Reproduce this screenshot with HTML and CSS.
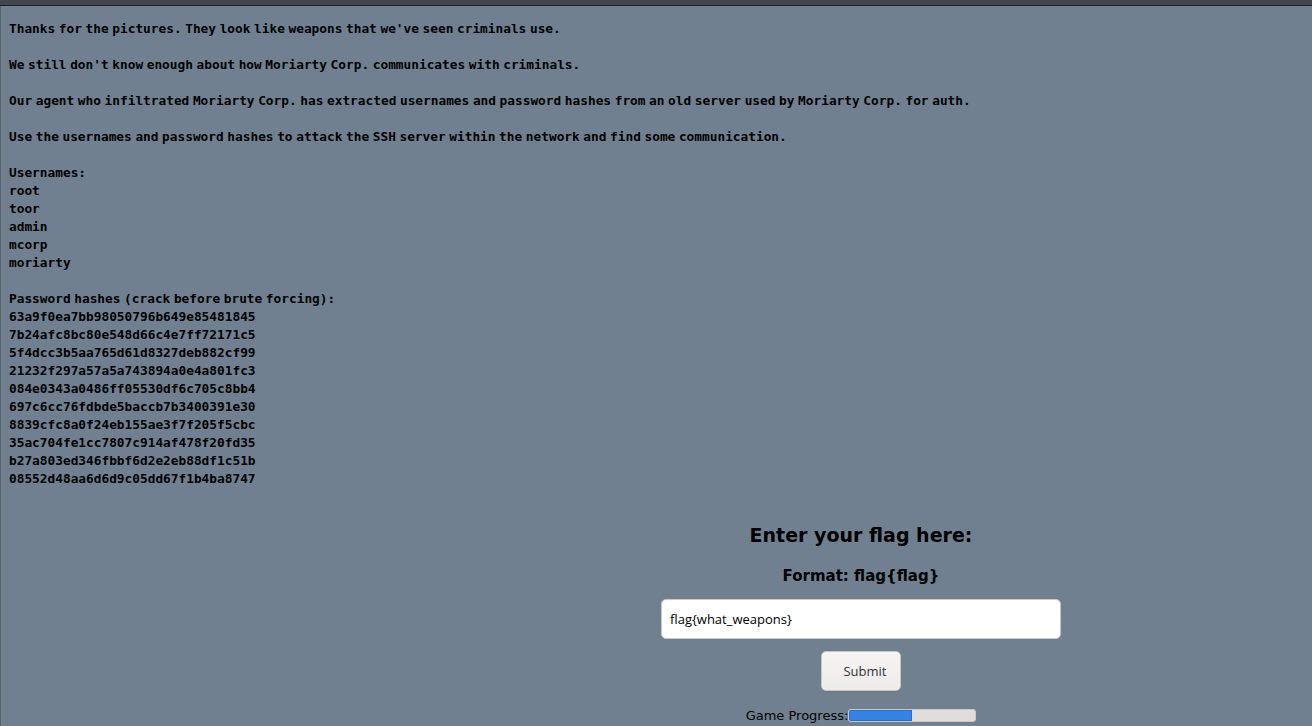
FILE: index.html
```html
<!DOCTYPE html>
<html lang="en">
<head>
<meta charset="utf-8">
<title>Flag</title>
<link rel="stylesheet" href="styles.css">
</head>
<body>
<div class="topbar"></div>
<main class="page">
<pre class="brief">Thanks for the pictures. They look like weapons that we've seen criminals use.

We still don't know enough about how Moriarty Corp. communicates with criminals.

Our agent who infiltrated Moriarty Corp. has extracted usernames and password hashes from an old server used by Moriarty Corp. for auth.

Use the usernames and password hashes to attack the SSH server within the network and find some communication.

Usernames:
root
toor
admin
mcorp
moriarty

Password hashes (crack before brute forcing):
63a9f0ea7bb98050796b649e85481845
7b24afc8bc80e548d66c4e7ff72171c5
5f4dcc3b5aa765d61d8327deb882cf99
21232f297a57a5a743894a0e4a801fc3
084e0343a0486ff05530df6c705c8bb4
697c6cc76fdbde5baccb7b3400391e30
8839cfc8a0f24eb155ae3f7f205f5cbc
35ac704fe1cc7807c914af478f20fd35
b27a803ed346fbbf6d2e2eb88df1c51b
08552d48aa6d6d9c05dd67f1b4ba8747</pre>
<section class="flag-form">
<h2 class="flag-title">Enter your flag here:</h2>
<h3 class="flag-format">Format: flag{flag}</h3>
<input class="flag-input" type="text" value="flag{what_weapons}">
<button class="submit-btn" type="button">Submit</button>
<div class="progress-row">
<span class="progress-label">Game Progress:</span>
<div class="progress"><div class="progress-fill" style="width:50%"></div></div>
</div>
</section>
</main>
</body>
</html>
```
FILE: styles.css
```css
html, body {
  margin: 0;
  padding: 0;
}
body {
  background: #708090;
  font-family: "DejaVu Sans", sans-serif;
  color: #000;
  overflow: hidden;
}
.topbar {
  height: 5px;
  background: #45474f;
  border-bottom: 1px solid #1e2026;
}
.page {
  border-left: 1px solid #59616b;
  padding: 14px 0 0 8px;
  min-height: calc(100vh - 6px);
  box-sizing: border-box;
}
.brief {
  margin: 0;
  font-family: "DejaVu Sans Mono", monospace;
  font-weight: bold;
  font-size: 12.8px;
  line-height: 18px;
  word-spacing: -4.1px;
  white-space: pre-wrap;
}
.flag-form {
  margin-left: 401px;
  display: flex;
  flex-direction: column;
  align-items: center;
}
.flag-title {
  margin: 35px 0 0;
  font-size: 19px;
  line-height: 24px;
  font-weight: bold;
}
.flag-format {
  margin: 20px 0 0;
  font-size: 15px;
  line-height: 19px;
  font-weight: bold;
}
.flag-input {
  margin-top: 13px;
  width: 400px;
  height: 40px;
  box-sizing: border-box;
  border: 1px solid #cdc7c2;
  border-radius: 5px;
  background: #fff;
  padding: 0 8px;
  font-family: "Open Sans", sans-serif;
  font-size: 13px;
  color: #000;
  outline: none;
}
.submit-btn {
  margin-top: 12px;
  width: 80px;
  height: 40px;
  box-sizing: border-box;
  border: 1px solid #cdc7c2;
  border-radius: 5px;
  background: linear-gradient(#f6f5f4, #edebe9);
  box-shadow: 0 1px 1px rgba(0,0,0,0.07);
  font-family: "Open Sans", sans-serif;
  font-size: 13px;
  color: #2e3436;
  padding: 0 0 0 8px;
}
.progress-row {
  margin-top: 17px;
  display: flex;
  align-items: center;
  font-size: 13px;
  line-height: 15px;
}
.progress-label {
  color: #000;
}
.progress {
  width: 128px;
  height: 13px;
  box-sizing: border-box;
  background: #e0dedb;
  border: 1px solid #cdc7c2;
  border-radius: 3px;
  overflow: hidden;
  display: flex;
}
.progress-fill {
  height: 100%;
  background: #3584e4;
  box-shadow: inset 0 0 0 1px #1c71d8;
  border-radius: 2px 0 0 2px;
}
```
